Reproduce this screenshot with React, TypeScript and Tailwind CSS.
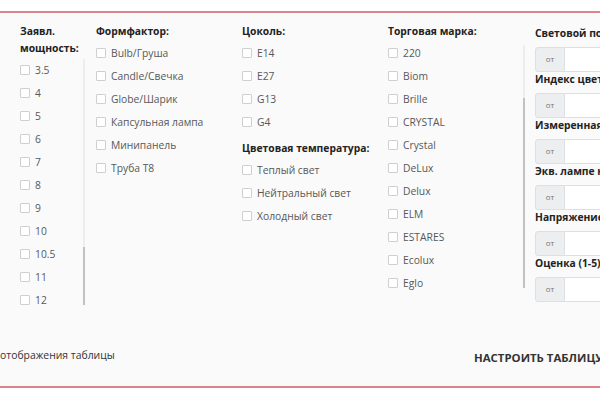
import React from "react";

const font = { fontFamily: '"Open Sans", "Noto Sans", sans-serif' };

function Item({ label }: { label: string }) {
  return (
    <div className="flex h-[23px] items-center gap-[5px] whitespace-nowrap">
      <span className="block h-[10px] w-[10px] shrink-0 rounded-[1px] border border-[#cfcfcf] bg-white" />
      <span className="text-[10.3px] leading-none text-[#585858]">{label}</span>
    </div>
  );
}

function Header({ children }: { children: React.ReactNode }) {
  return <div className="text-[10.3px] font-bold leading-[17px] text-[#222] whitespace-nowrap">{children}</div>;
}

function Track({ top, thumbTop, thumbHeight, height }: { top: number; thumbTop: number; thumbHeight: number; height: number }) {
  return (
    <div className="w-[2px] shrink-0 bg-[#ededed]" style={{ marginTop: top, height }}>
      <div className="w-[2px] bg-[#c2c2c2]" style={{ marginTop: thumbTop, height: thumbHeight }} />
    </div>
  );
}

function RangeField({ label }: { label: string }) {
  return (
    <div>
      <div className="h-[17px] text-[10.3px] font-bold leading-[17px] text-[#222] whitespace-nowrap">{label}</div>
      <div className="mt-[5px] flex h-[25px]">
        <div className="flex w-[30px] shrink-0 items-center justify-center rounded-l-[3px] border border-[#dcdfe3] bg-[#eceef0] text-[8px] text-[#777]">
          от
        </div>
        <div className="w-[200px] shrink-0 border border-l-0 border-[#dcdfe3] bg-white" />
      </div>
    </div>
  );
}

export default function App() {
  const powers = ["3.5", "4", "5", "6", "7", "8", "9", "10", "10.5", "11", "12"];
  const forms = ["Bulb/Груша", "Candle/Свечка", "Globe/Шарик", "Капсульная лампа", "Минипанель", "Труба T8"];
  const sockets = ["E14", "E27", "G13", "G4"];
  const temps = ["Теплый свет", "Нейтральный свет", "Холодный свет"];
  const brands = ["220", "Biom", "Brille", "CRYSTAL", "Crystal", "DeLux", "Delux", "ELM", "ESTARES", "Ecolux", "Eglo"];
  const ranges = [
    "Световой поток (лм):",
    "Индекс цветопередачи:",
    "Измеренная мощность:",
    "Экв. лампе накаливания:",
    "Напряжение:",
    "Оценка (1-5):",
  ];

  return (
    <div className="h-[400px] w-[600px] overflow-hidden bg-white" style={font}>
      <div className="h-[11px]" />
      <div className="flex h-[377px] flex-col border-y-2 border-[#d9848c] bg-[#fafafa]">
        <div className="flex pl-[20px] pt-[9.5px]">
          {/* col 1 */}
          <div className="flex w-[76px] shrink-0 flex-col">
            <Header>
              Заявл.
              <br />
              мощность:
            </Header>
            <div className="mt-[2px] flex">
              <div className="w-[63px]">
                {powers.map((p) => (
                  <Item key={p} label={p} />
                ))}
              </div>
              <Track top={0} height={246} thumbTop={188} thumbHeight={58} />
            </div>
          </div>
          {/* col 2 */}
          <div className="w-[146px] shrink-0">
            <Header>Формфактор:</Header>
            <div className="mt-[2px]">
              {forms.map((f) => (
                <Item key={f} label={f} />
              ))}
            </div>
          </div>
          {/* col 3 */}
          <div className="w-[146px] shrink-0">
            <Header>Цоколь:</Header>
            <div className="mt-[2px]">
              {sockets.map((s) => (
                <Item key={s} label={s} />
              ))}
            </div>
            <div className="mt-[6px]">
              <Header>Цветовая температура:</Header>
            </div>
            <div className="mt-[2px]">
              {temps.map((t) => (
                <Item key={t} label={t} />
              ))}
            </div>
          </div>
          {/* col 4 */}
          <div className="flex w-[147px] shrink-0 flex-col">
            <Header>Торговая марка:</Header>
            <div className="mt-[2px] flex">
              <div className="w-[135px]">
                {brands.map((b) => (
                  <Item key={b} label={b} />
                ))}
              </div>
              <Track top={3} height={243} thumbTop={53} thumbHeight={190} />
            </div>
          </div>
          {/* col 5 */}
          <div className="mt-[2px] flex shrink-0 flex-col">
            {ranges.map((r, i) => (
              <div key={r} className={i === 0 ? "" : "-mt-[1px]"}>
                <RangeField label={r} />
              </div>
            ))}
          </div>
        </div>
        <div className="mt-auto flex items-end pb-[20px]">
          <div className="mb-[3px] w-[474px] shrink-0 text-[10.4px] leading-[16px] text-[#333] whitespace-nowrap">
            отображения таблицы
          </div>
          <div className="shrink-0 text-[11.4px] font-bold uppercase leading-[17px] text-[#333] whitespace-nowrap">
            Настроить таблицу
          </div>
        </div>
      </div>
    </div>
  );
}
